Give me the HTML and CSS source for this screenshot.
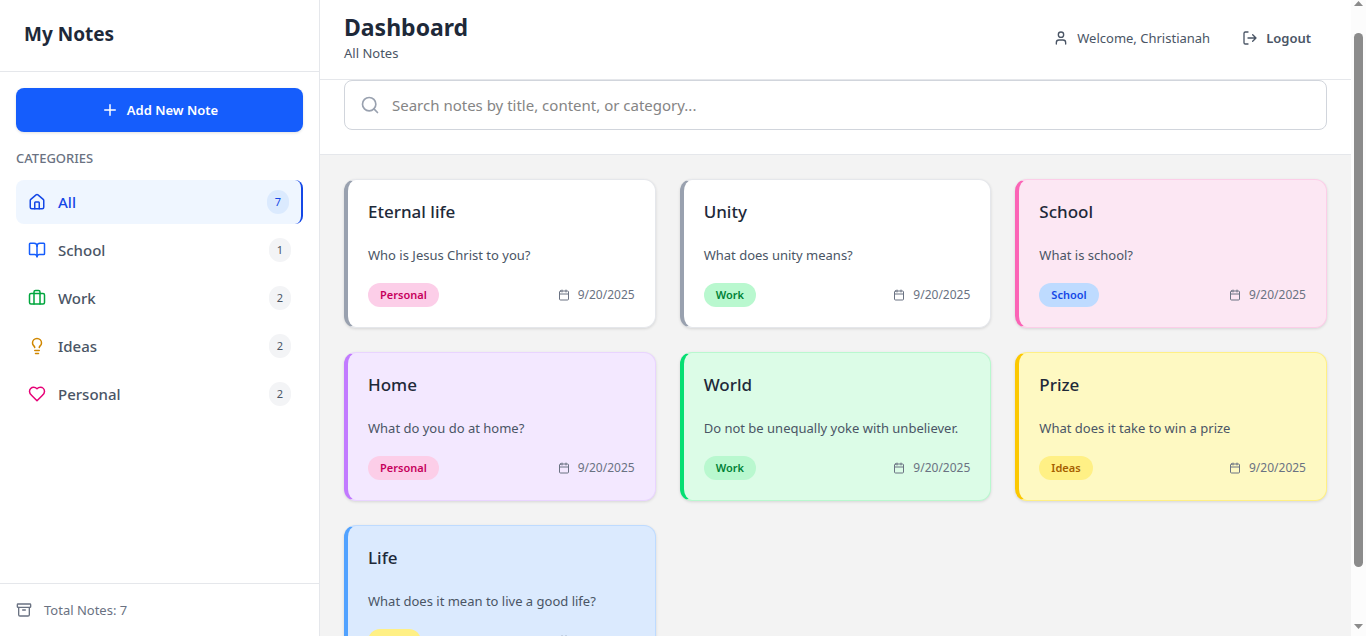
FILE: index.html
```html
<!DOCTYPE html>
<html lang="en">
<head>
<meta charset="utf-8">
<meta name="viewport" content="width=device-width, initial-scale=1">
<title>My Notes</title>
<link rel="stylesheet" href="styles.css">
</head>
<body>
<svg class="sprite" aria-hidden="true">
  <symbol id="calendar" viewBox="0 0 24 24"><path d="M8 2v4M16 2v4M3 10h18"/><rect x="3" y="4" width="18" height="18" rx="2"/></symbol>
</svg>
<div class="app">
  <aside class="sidebar">
    <div class="brand"><h2 class="brand-title">My Notes</h2></div>
    <div class="sidebar-body">
      <button type="button" class="add-button">
        <svg class="icon icon-md" viewBox="0 0 24 24" aria-hidden="true"><path d="M5 12h14M12 5v14"/></svg>
        Add New Note
      </button>
      <h3 class="section-title">CATEGORIES</h3>
      <nav class="categories">
        <button type="button" class="category active">
          <svg class="icon icon-md" viewBox="0 0 24 24" aria-hidden="true"><path d="M15 21v-8a1 1 0 0 0-1-1h-4a1 1 0 0 0-1 1v8"/><path d="M3 10a2 2 0 0 1 .709-1.528l7-5.999a2 2 0 0 1 2.582 0l7 5.999A2 2 0 0 1 21 10v9a2 2 0 0 1-2 2H5a2 2 0 0 1-2-2z"/></svg>
          <span class="category-name">All</span><span class="count">7</span>
        </button>
        <button type="button" class="category">
          <svg class="icon icon-md blue" viewBox="0 0 24 24" aria-hidden="true"><path d="M12 7v14"/><path d="M3 18a1 1 0 0 1-1-1V4a1 1 0 0 1 1-1h5a4 4 0 0 1 4 4 4 4 0 0 1 4-4h5a1 1 0 0 1 1 1v13a1 1 0 0 1-1 1h-6a3 3 0 0 0-3 3 3 3 0 0 0-3-3z"/></svg>
          <span class="category-name">School</span><span class="count">1</span>
        </button>
        <button type="button" class="category">
          <svg class="icon icon-md green" viewBox="0 0 24 24" aria-hidden="true"><path d="M16 20V4a2 2 0 0 0-2-2h-4a2 2 0 0 0-2 2v16"/><rect x="2" y="6" width="20" height="14" rx="2"/></svg>
          <span class="category-name">Work</span><span class="count">2</span>
        </button>
        <button type="button" class="category">
          <svg class="icon icon-md amber" viewBox="0 0 24 24" aria-hidden="true"><path d="M15 14c.2-1 .7-1.7 1.5-2.5 1-.9 1.5-2.2 1.5-3.5A6 6 0 0 0 6 8c0 1 .2 2.2 1.5 3.5.7.7 1.3 1.5 1.5 2.5M9 18h6M10 22h4"/></svg>
          <span class="category-name">Ideas</span><span class="count">2</span>
        </button>
        <button type="button" class="category">
          <svg class="icon icon-md pink" viewBox="0 0 24 24" aria-hidden="true"><path d="M19 14c1.49-1.46 3-3.21 3-5.5A5.5 5.5 0 0 0 16.5 3c-1.76 0-3 .5-4.5 2-1.5-1.5-2.74-2-4.5-2A5.5 5.5 0 0 0 2 8.500c0 2.300 1.500 4.050 3 5.500l7 7Z"/></svg>
          <span class="category-name">Personal</span><span class="count">2</span>
        </button>
      </nav>
    </div>
    <footer class="sidebar-footer">
      <svg class="icon icon-sm" viewBox="0 0 24 24" aria-hidden="true"><rect x="2" y="3" width="20" height="5" rx="1"/><path d="M4 8v11a2 2 0 0 0 2 2h12a2 2 0 0 0 2-2V8M10 12h4"/></svg>
      <span>Total Notes: 7</span>
    </footer>
  </aside>

  <main class="main">
    <header class="topbar">
      <div>
        <h1 class="page-title">Dashboard</h1>
        <p class="page-subtitle">All Notes</p>
      </div>
      <div class="account">
        <div class="welcome">
          <svg class="icon icon-sm" viewBox="0 0 24 24" aria-hidden="true"><path d="M19 21v-2a4 4 0 0 0-4-4H9a4 4 0 0 0-4 4v2"/><circle cx="12" cy="7" r="4"/></svg>
          <span>Welcome, Christianah</span>
        </div>
        <button type="button" class="logout">
          <svg class="icon icon-sm" viewBox="0 0 24 24" aria-hidden="true"><path d="M9 21H5a2 2 0 0 1-2-2V5a2 2 0 0 1 2-2h4M16 17l5-5-5-5M21 12H9"/></svg>
          Logout
        </button>
      </div>
    </header>
    <div class="search-area">
      <label class="search">
        <svg class="icon icon-lg" viewBox="0 0 24 24" aria-hidden="true"><circle cx="11" cy="11" r="8"/><path d="m21 21-4.300-4.300"/></svg>
        <input type="search" class="search-input" aria-label="Search notes" placeholder="Search notes by title, content, or category...">
      </label>
    </div>
    <section class="notes" aria-label="Notes">
      <article class="note note-white">
        <h3 class="note-title">Eternal life</h3>
        <p class="note-text">Who is Jesus Christ to you?</p>
        <div class="note-meta"><span class="tag tag-personal">Personal</span><span class="date"><svg class="icon icon-xs" aria-hidden="true"><use href="#calendar"/></svg>9/20/2025</span></div>
      </article>
      <article class="note note-white">
        <h3 class="note-title">Unity</h3>
        <p class="note-text">What does unity means?</p>
        <div class="note-meta"><span class="tag tag-work">Work</span><span class="date"><svg class="icon icon-xs" aria-hidden="true"><use href="#calendar"/></svg>9/20/2025</span></div>
      </article>
      <article class="note note-pink">
        <h3 class="note-title">School</h3>
        <p class="note-text">What is school?</p>
        <div class="note-meta"><span class="tag tag-school">School</span><span class="date"><svg class="icon icon-xs" aria-hidden="true"><use href="#calendar"/></svg>9/20/2025</span></div>
      </article>
      <article class="note note-purple">
        <h3 class="note-title">Home</h3>
        <p class="note-text">What do you do at home?</p>
        <div class="note-meta"><span class="tag tag-personal">Personal</span><span class="date"><svg class="icon icon-xs" aria-hidden="true"><use href="#calendar"/></svg>9/20/2025</span></div>
      </article>
      <article class="note note-green">
        <h3 class="note-title">World</h3>
        <p class="note-text">Do not be unequally yoke with unbeliever.</p>
        <div class="note-meta"><span class="tag tag-work">Work</span><span class="date"><svg class="icon icon-xs" aria-hidden="true"><use href="#calendar"/></svg>9/20/2025</span></div>
      </article>
      <article class="note note-yellow">
        <h3 class="note-title">Prize</h3>
        <p class="note-text">What does it take to win a prize</p>
        <div class="note-meta"><span class="tag tag-ideas">Ideas</span><span class="date"><svg class="icon icon-xs" aria-hidden="true"><use href="#calendar"/></svg>9/20/2025</span></div>
      </article>
      <article class="note note-blue">
        <h3 class="note-title">Life</h3>
        <p class="note-text">What does it mean to live a good life?</p>
        <div class="note-meta"><span class="tag tag-ideas">Ideas</span><span class="date"><svg class="icon icon-xs" aria-hidden="true"><use href="#calendar"/></svg>9/20/2025</span></div>
      </article>
    </section>
  </main>

  <div class="scrollbar" aria-hidden="true">
    <svg class="arrow" viewBox="0 0 9 5"><path d="M0 5 4.500 0 9 5z"/></svg>
    <div class="track"><div class="thumb"></div></div>
    <svg class="arrow" viewBox="0 0 9 5"><path d="M0 0h9L4.500 5z"/></svg>
  </div>
</div>
</body>
</html>
```

FILE: styles.css
```css
* { box-sizing: border-box; margin: 0; }

body {
  font-family: "Noto Sans", "Open Sans", sans-serif;
  font-size: 13px;
  line-height: 20px;
  color: #4a5565;
  background: #f3f3f3;
}

button, input { font: inherit; color: inherit; }
button { border: 0; background: none; cursor: pointer; }

.sprite { position: absolute; width: 0; height: 0; }

.app { display: flex; height: 100vh; overflow: hidden; }

/* Icons */
.icon {
  flex: none;
  fill: none;
  stroke: currentColor;
  stroke-width: 2;
  stroke-linecap: round;
  stroke-linejoin: round;
}
.icon-xs { width: 12px; height: 12px; }
.icon-sm { width: 16px; height: 16px; }
.icon-md { width: 18px; height: 18px; }
.icon-lg { width: 20px; height: 20px; }
.blue { color: #155dfc; }
.green { color: #00a63e; }
.amber { color: #d08700; }
.pink { color: #e60076; }

/* Sidebar */
.sidebar {
  display: flex;
  flex: none;
  flex-direction: column;
  width: 320px;
  background: #fff;
  border-right: 1px solid #e5e7eb;
}
.brand { padding: 20px 24px 23px; border-bottom: 1px solid #e5e7eb; }
.brand-title { font-size: 19px; line-height: 28px; font-weight: 700; color: #1e2939; }
.sidebar-body { flex: 1; padding: 16px; }
.add-button {
  display: flex;
  align-items: center;
  justify-content: center;
  gap: 8px;
  width: 100%;
  padding: 12px 16px;
  border-radius: 8px;
  background: #155dfc;
  color: #fff;
  font-weight: 600;
  box-shadow: 0 1px 3px rgba(0, 0, 0, .12);
}
.section-title { margin: 16px 0 12px; font-size: 13px; font-weight: 500; color: #6a7282; }
.categories { display: flex; flex-direction: column; gap: 4px; }
.category {
  display: flex;
  align-items: center;
  gap: 12px;
  padding: 10px 12px;
  border-radius: 8px;
  text-align: left;
}
.category.active { background: #eff6ff; color: #1447e6; border-right: 2px solid #1447e6; }
.category-name { flex: 1; font-size: 15px; line-height: 24px; font-weight: 500; }
.count {
  padding: 4px 8px;
  border-radius: 12px;
  background: #f3f4f6;
  font-size: 11px;
  line-height: 16px;
}
.active .count { background: #dbeafe; }
.sidebar-footer {
  display: flex;
  align-items: center;
  gap: 12px;
  padding: 16px;
  border-top: 1px solid #e5e7eb;
  color: #6a7282;
}

/* Main column */
.main { flex: 1; min-width: 0; overflow: hidden; }
.topbar {
  display: flex;
  align-items: center;
  justify-content: space-between;
  padding: 12px 24px 16px;
  background: #fff;
  border-bottom: 1px solid #e5e7eb;
}
.page-title { font-size: 23px; line-height: 31px; font-weight: 700; color: #1e2939; }
.page-subtitle { line-height: 20px; }
.account { display: flex; align-items: center; gap: 16px; }
.welcome { display: flex; align-items: center; gap: 8px; }
.logout { display: flex; align-items: center; gap: 8px; padding: 8px 16px; font-weight: 600; }
.search-area { padding: 0 24px 24px; background: #fff; border-bottom: 1px solid #e5e7eb; }
.search {
  display: flex;
  align-items: center;
  gap: 12px;
  padding: 12px 15px;
  border: 1px solid #d1d5dc;
  border-radius: 8px;
  color: #99a1af;
}
.search-input {
  flex: 1;
  min-width: 0;
  padding: 0;
  border: 0;
  outline: 0;
  background: none;
  font-size: 15px;
  line-height: 24px;
  height: 24px;
  color: #1e2939;
}
.search-input::placeholder { color: #858585; }

/* Notes */
.notes {
  display: grid;
  grid-template-columns: repeat(3, minmax(0, 1fr));
  gap: 24px;
  padding: 24px;
}
.note {
  padding: 20px;
  border: 1px solid;
  border-left-width: 4px;
  border-radius: 12px;
  box-shadow: 0 1px 3px rgba(0, 0, 0, .12);
}
.note-title { margin-bottom: 20px; font-size: 17px; line-height: 24px; font-weight: 500; color: #1e2939; }
.note-text { margin-bottom: 16px; line-height: 23px; }
.note-meta { display: flex; align-items: center; justify-content: space-between; }
.note-white { background: #fff; border-color: #e5e7eb #e5e7eb #e5e7eb #99a1af; }
.note-pink { background: #fce7f3; border-color: #fccee8 #fccee8 #fccee8 #fb64b6; }
.note-purple { background: #f3e8ff; border-color: #e9d4ff #e9d4ff #e9d4ff #c27aff; }
.note-green { background: #dcfce7; border-color: #b9f8cf #b9f8cf #b9f8cf #05df72; }
.note-yellow { background: #fef9c2; border-color: #fff085 #fff085 #fff085 #fcc800; }
.note-blue { background: #dbeafe; border-color: #bedbff #bedbff #bedbff #51a2ff; }

.tag { padding: 4px 12px; border-radius: 12px; font-size: 11px; line-height: 16px; font-weight: 600; }
.tag-personal { background: #fccee8; color: #c6005c; }
.tag-work { background: #b9f8cf; color: #008236; }
.tag-school { background: #bedbff; color: #1447e6; }
.tag-ideas { background: #fff085; color: #a65f00; }
.date { display: flex; align-items: center; gap: 8px; font-size: 12px; line-height: 16px; color: #6a7282; }

/* Scroll indicator */
.scrollbar {
  display: flex;
  flex: none;
  flex-direction: column;
  align-items: center;
  width: 15px;
  padding: 1px 0 7px;
  background: #fcfcfc;
}
.arrow { width: 9px; height: 5px; fill: #8b8b8b; }
.track { flex: 1; width: 9px; padding: 27px 0 57px; }
.thumb { height: 100%; border-radius: 5px; background: #8b8b8b; }
```
